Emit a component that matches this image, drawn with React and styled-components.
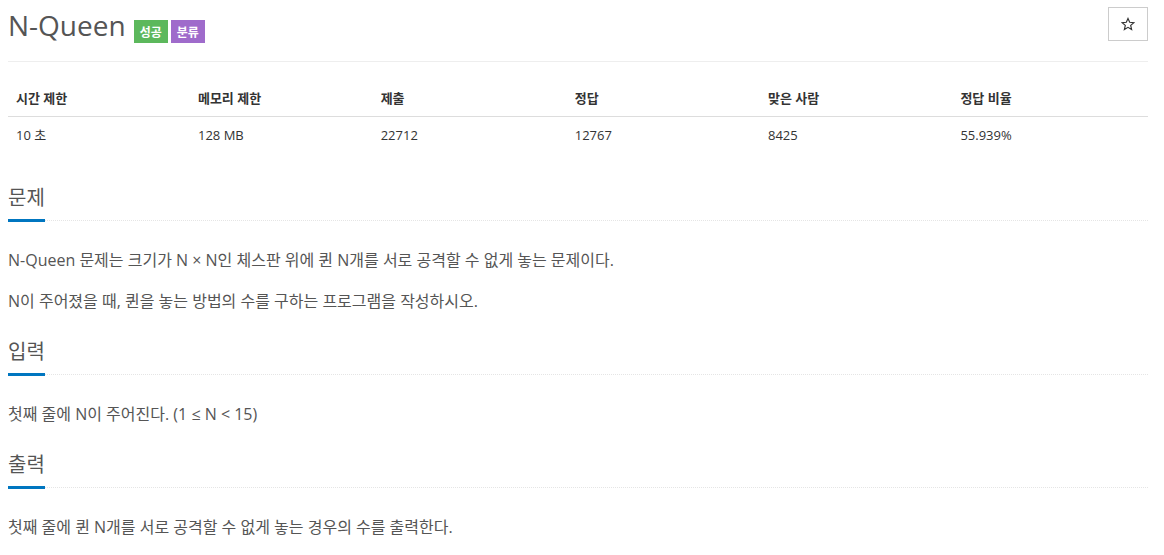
import React from 'react';
import styled, { createGlobalStyle } from 'styled-components';

const GlobalStyle = createGlobalStyle`
  body {
    margin: 0;
    background: #fff;
    font-family: 'Open Sans', 'Noto Sans CJK KR', sans-serif;
    color: #333;
  }
`;

const stats = [
  { label: '시간 제한', value: '10 초', width: 183 },
  { label: '메모리 제한', value: '128 MB', width: 183 },
  { label: '제출', value: '22712', width: 194 },
  { label: '정답', value: '12767', width: 193 },
  { label: '맞은 사람', value: '8425', width: 193 },
  { label: '정답 비율', value: '55.939%', width: 194 },
];

const sections = [
  {
    title: '문제',
    body: [
      'N-Queen 문제는 크기가 N × N인 체스판 위에 퀸 N개를 서로 공격할 수 없게 놓는 문제이다.',
      'N이 주어졌을 때, 퀸을 놓는 방법의 수를 구하는 프로그램을 작성하시오.',
    ],
  },
  { title: '입력', body: ['첫째 줄에 N이 주어진다. (1 ≤ N < 15)'] },
  { title: '출력', body: ['첫째 줄에 퀸 N개를 서로 공격할 수 없게 놓는 경우의 수를 출력한다.'] },
];

const StarIcon = () => (
  <svg width='14' height='14' viewBox='0 0 24 24' fill='none'>
    <path
      d='M12 2.5l2.9 6.6 7.1.6-5.4 4.7 1.6 7-6.2-3.7-6.2 3.7 1.6-7L2 9.7l7.1-.6z'
      stroke='#333'
      strokeWidth='2'
      strokeLinejoin='miter'
    />
  </svg>
);

const App = () => {
  return (
    <Page>
      <GlobalStyle />
      <Header>
        <TitleRow>
          <Title>N-Queen</Title>
          <Badge color='#5cb85c'>성공</Badge>
          <Badge color='#9f6bcb'>분류</Badge>
        </TitleRow>
        <StarButton type='button' aria-label='star'>
          <StarIcon />
        </StarButton>
      </Header>

      <Table>
        <thead>
          <tr>
            {stats.map(s => (
              <Th key={s.label} style={{ width: s.width }}>
                {s.label}
              </Th>
            ))}
          </tr>
        </thead>
        <tbody>
          <tr>
            {stats.map(s => (
              <Td key={s.label}>{s.value}</Td>
            ))}
          </tr>
        </tbody>
      </Table>

      {sections.map((sec, i) => (
        <Section key={sec.title} first={i === 0}>
          <Headline>
            <H2>{sec.title}</H2>
          </Headline>
          <Body>
            {sec.body.map((line, j) => (
              <P key={j}>{line}</P>
            ))}
          </Body>
        </Section>
      ))}
    </Page>
  );
};

const Page = styled.div`
  padding: 0 16px 0 8px;
`;

const Header = styled.div`
  display: flex;
  justify-content: space-between;
  align-items: flex-start;
  padding: 7px 0 18px;
  border-bottom: 1px solid #eee;
`;

const TitleRow = styled.div`
  display: flex;
  align-items: flex-end;
  gap: 3px;
`;

const Title = styled.h1`
  margin: 0 5px 0 0;
  font-family: 'Open Sans', sans-serif;
  font-weight: 400;
  font-size: 28px;
  line-height: 36px;
  color: #555;
`;

const Badge = styled.span`
  display: inline-block;
  height: 23px;
  line-height: 23px;
  padding: 0 6px;
  margin-bottom: 0;
  background: ${p => p.color};
  color: #fff;
  font-size: 12px;
  font-weight: 700;
  font-family: 'Noto Sans CJK KR', sans-serif;
`;

const StarButton = styled.button`
  display: flex;
  align-items: center;
  justify-content: center;
  width: 40px;
  height: 34px;
  border: 1px solid #ccc;
  background: #fff;
  padding: 0;
  cursor: pointer;
`;

const Table = styled.table`
  width: 100%;
  margin-top: 18px;
  border-collapse: collapse;
  font-size: 13px;
`;

const Th = styled.th`
  text-align: left;
  padding: 8px;
  line-height: 20px;
  font-weight: 700;
  border-bottom: 1px solid #ddd;
`;

const Td = styled.td`
  padding: 8px;
  line-height: 20px;
`;

const Section = styled.section`
  margin-top: ${p => (p.first ? '29px' : '20px')};
`;

const Headline = styled.div`
  border-bottom: 1px dotted #e5e5e5;
`;

const H2 = styled.h2`
  display: inline-block;
  margin: 0 0 -2px;
  padding-bottom: 7px;
  border-bottom: 3px solid #0076c0;
  font-size: 20px;
  font-weight: 400;
  line-height: 30px;
  color: #555;
  font-family: 'Noto Sans CJK KR', sans-serif;
`;

const Body = styled.div`
  padding-top: 24px;
`;

const P = styled.p`
  margin: 0 0 11px;
  font-size: 16px;
  line-height: 30px;
  color: #555;
`;

export default App;
